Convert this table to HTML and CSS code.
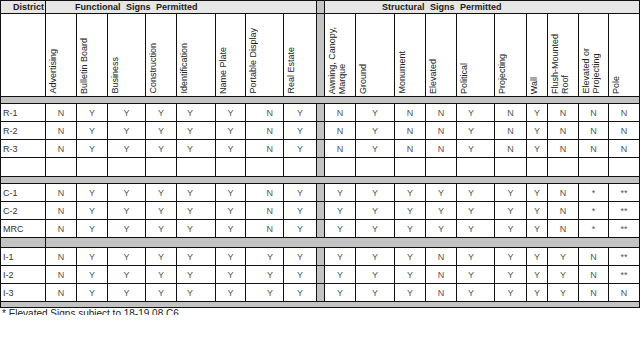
FILE: index.html
```html
<!DOCTYPE html>
<html>
<head>
<meta charset="utf-8">
<link rel="stylesheet" href="styles.css">
</head>
<body>
<div class="wrap">
<table class="tbl">
<colgroup>
<col class="w45"><col class="w31"><col class="w31"><col class="w38"><col class="w31"><col class="w39"><col class="w30"><col class="w38"><col class="w33">
<col class="w8">
<col class="w31"><col class="w39"><col class="w31"><col class="w31"><col class="w38"><col class="w32"><col class="w21"><col class="w31"><col class="w30"><col class="w31">
</colgroup>
<tr class="h1">
<td class="th-dist">District</td>
<td colspan="8" class="th-func">Functional Signs Permitted</td>
<td class="gap"></td>
<td colspan="10" class="th-struct">Structural Signs Permitted</td>
</tr>
<tr class="h2">
<td></td>
<td><div class="vt">Advertising</div></td>
<td><div class="vt">Bulletin Board</div></td>
<td><div class="vt">Business</div></td>
<td><div class="vt">Construction</div></td>
<td><div class="vt">Identification</div></td>
<td><div class="vt">Name Plate</div></td>
<td><div class="vt">Portable Display</div></td>
<td><div class="vt">Real Estate</div></td>
<td class="gap"></td>
<td><div class="vt">Awning, Canopy,<br>Marque</div></td>
<td><div class="vt">Ground</div></td>
<td><div class="vt">Monument</div></td>
<td><div class="vt">Elevated</div></td>
<td><div class="vt">Political</div></td>
<td><div class="vt">Projecting</div></td>
<td><div class="vt">Wall</div></td>
<td><div class="vt">Flush-Mounted<br>Roof</div></td>
<td><div class="vt">Elevated or<br>Projecting</div></td>
<td><div class="vt">Pole</div></td>
</tr>
<tr class="band b7"><td colspan="20"></td></tr>
<tr class="row"><td class="dist">R-1</td><td>N</td><td>Y</td><td>Y</td><td>Y</td><td class="ident">Y</td><td>Y</td><td class="port">N</td><td>Y</td><td class="gap"></td><td>N</td><td>Y</td><td>N</td><td>N</td><td class="pol">Y</td><td>N</td><td>Y</td><td>N</td><td>N</td><td>N</td></tr>
<tr class="row"><td class="dist">R-2</td><td>N</td><td>Y</td><td>Y</td><td>Y</td><td class="ident">Y</td><td>Y</td><td class="port">N</td><td>Y</td><td class="gap"></td><td>N</td><td>Y</td><td>N</td><td>N</td><td class="pol">Y</td><td>N</td><td>Y</td><td>N</td><td>N</td><td>N</td></tr>
<tr class="row"><td class="dist">R-3</td><td>N</td><td>Y</td><td>Y</td><td>Y</td><td class="ident">Y</td><td>Y</td><td class="port">N</td><td>Y</td><td class="gap"></td><td>N</td><td>Y</td><td>N</td><td>N</td><td class="pol">Y</td><td>N</td><td>Y</td><td>N</td><td>N</td><td>N</td></tr>
<tr class="row tall"><td class="dist"></td><td></td><td></td><td></td><td></td><td></td><td></td><td></td><td></td><td class="gap"></td><td></td><td></td><td></td><td></td><td></td><td></td><td></td><td></td><td></td><td></td></tr>
<tr class="band b7"><td colspan="20"></td></tr>
<tr class="row"><td class="dist">C-1</td><td>N</td><td>Y</td><td>Y</td><td>Y</td><td class="ident">Y</td><td>Y</td><td class="port">N</td><td>Y</td><td class="gap"></td><td>Y</td><td>Y</td><td>Y</td><td>Y</td><td class="pol">Y</td><td>Y</td><td>Y</td><td>N</td><td>*</td><td>**</td></tr>
<tr class="row"><td class="dist">C-2</td><td>N</td><td>Y</td><td>Y</td><td>Y</td><td class="ident">Y</td><td>Y</td><td class="port">N</td><td>Y</td><td class="gap"></td><td>Y</td><td>Y</td><td>Y</td><td>Y</td><td class="pol">Y</td><td>Y</td><td>Y</td><td>N</td><td>*</td><td>**</td></tr>
<tr class="row"><td class="dist">MRC</td><td>N</td><td>Y</td><td>Y</td><td>Y</td><td class="ident">Y</td><td>Y</td><td class="port">N</td><td>Y</td><td class="gap"></td><td>Y</td><td>Y</td><td>Y</td><td>Y</td><td class="pol">Y</td><td>Y</td><td>Y</td><td>N</td><td>*</td><td>**</td></tr>
<tr class="band b10"><td></td><td colspan="19"></td></tr>
<tr class="row"><td class="dist">I-1</td><td>N</td><td>Y</td><td>Y</td><td>Y</td><td class="ident">Y</td><td>Y</td><td class="port">Y</td><td>Y</td><td class="gap"></td><td>Y</td><td>Y</td><td>Y</td><td>N</td><td class="pol">Y</td><td>Y</td><td>Y</td><td>Y</td><td>N</td><td>**</td></tr>
<tr class="row"><td class="dist">I-2</td><td>N</td><td>Y</td><td>Y</td><td>Y</td><td class="ident">Y</td><td>Y</td><td class="port">Y</td><td>Y</td><td class="gap"></td><td>Y</td><td>Y</td><td>Y</td><td>N</td><td class="pol">Y</td><td>Y</td><td>Y</td><td>Y</td><td>N</td><td>**</td></tr>
<tr class="row"><td class="dist">I-3</td><td>N</td><td>Y</td><td>Y</td><td>Y</td><td class="ident">Y</td><td>Y</td><td class="port">Y</td><td>Y</td><td class="gap"></td><td>Y</td><td>Y</td><td>Y</td><td>N</td><td class="pol">Y</td><td>Y</td><td>Y</td><td>Y</td><td>N</td><td>N</td></tr>
<tr class="band b6"><td colspan="20"></td></tr>
</table>
<div class="note">* Elevated Signs subject to 18-19.08 C6</div>
</div>
</body>
</html>
```
FILE: styles.css
```css
body {
  margin: 0;
  background: #fff;
  font-family: "Liberation Sans", Arial, sans-serif;
}
.wrap {
  height: 315px;
  overflow: hidden;
}
.tbl {
  border-collapse: collapse;
  table-layout: fixed;
  width: 640px;
}
.w45 { width: 45px; }
.w39 { width: 39px; }
.w38 { width: 38px; }
.w33 { width: 33px; }
.w32 { width: 32px; }
.w31 { width: 31px; }
.w30 { width: 30px; }
.w21 { width: 21px; }
.w8 { width: 8px; }
.tbl td {
  border: 1px solid #111;
  padding: 0;
  font-size: 9px;
  line-height: 10px;
  color: #555;
  text-align: center;
  vertical-align: middle;
  overflow: hidden;
  white-space: nowrap;
}
.h1 td {
  height: 12px;
  background: #e6e6e6;
  font-weight: bold;
  color: #1a1a1a;
  text-align: left;
  word-spacing: 3px;
}
.th-dist { padding-left: 12px !important; }
.th-func { padding-left: 29px !important; }
.th-struct { padding-left: 57px !important; }
.h2 td {
  height: 80px;
  vertical-align: bottom;
  text-align: left;
  padding: 0 0 2px 2px;
}
.vt {
  writing-mode: vertical-rl;
  transform: rotate(180deg);
  color: #222;
  font-size: 9px;
  line-height: 10px;
}
.tbl .gap,
.h1 .gap,
.h2 .gap {
  background: #c3c3c3;
  padding: 0;
}
.band td {
  background: #c3c3c3;
}
.b7 td { height: 6px; }
.b10 td { height: 9px; }
.b6 td { height: 5px; }
.row td { height: 17px; }
.row.tall td { height: 18px; }
.tbl .dist {
  text-align: left;
  padding-left: 2px;
  color: #333;
}
.tbl .ident {
  text-align: left;
  padding-left: 10px;
}
.tbl .pol {
  text-align: left;
  padding-left: 11px;
}
.tbl .port {
  text-align: right;
  padding-right: 10px;
}
.note {
  font-size: 10px;
  line-height: 12px;
  color: #222;
  padding-left: 2px;
}
```
